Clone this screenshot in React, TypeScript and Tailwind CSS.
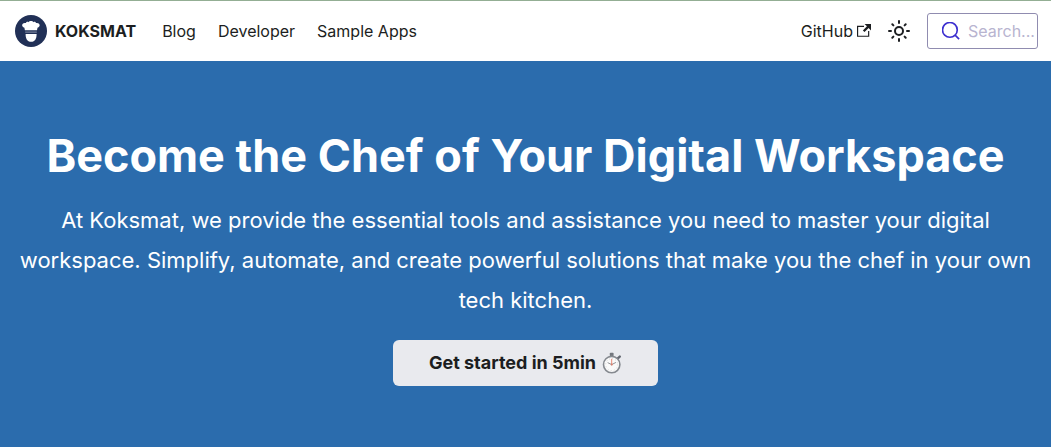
import React from "react";

function ChefLogo() {
  return (
    <svg width="32" height="32" viewBox="0 0 32 32" aria-hidden="true">
      <circle cx="16" cy="16" r="16" fill="#213056" />
      <path
        d="M9.9 15.2 9.4 12.7C7.8 12.4 6.9 11.2 7.2 9.8 7.5 8.4 9 7.5 10.9 8.1 11.3 6.7 12.7 6.4 13.7 7.2 14.3 5.8 17.6 5.7 18.3 7.2 19.5 6.4 20.7 6.9 21 8.1 22.7 7.5 24.3 8.4 24.6 9.8 24.9 11.2 24 12.4 22.5 12.7L22 15.2Z"
        fill="#fff"
      />
      <path d="M10.2 16.6H21.8V17.6H10.2Z" fill="#8d96ad" />
      <path d="M10.6 18.9H21.6C21.6 23.5 20 26.8 16.1 26.8S10.6 23.5 10.6 18.9Z" fill="#fff" />
    </svg>
  );
}

function ExternalIcon() {
  return (
    <svg width="14" height="14" viewBox="0 0 24 24" fill="currentColor" aria-hidden="true">
      <path d="M21 12v10h-21v-19h12v2h-10v15h17v-8h2zm3-12h-10.988l4.035 4-6.977 7.07 2.828 2.828 6.977-7.07 4.125 4.172v-11z" />
    </svg>
  );
}

function SunIcon() {
  return (
    <svg width="24" height="24" viewBox="0 0 24 24" fill="none" stroke="currentColor" strokeWidth="2" strokeLinecap="round" aria-hidden="true">
      <circle cx="12" cy="12" r="4" />
      <path d="M2 12h2M20 12h2M12 2v2M12 20v2M5.3 5.3l1.1 1.1M17.6 17.6l1.1 1.1M18.7 5.3l-1.1 1.1M6.4 17.6l-1.1 1.1" />
    </svg>
  );
}

function SearchIcon() {
  return (
    <svg className="shrink-0" width="18" height="18" viewBox="1 1 18.4 18.4" fill="none" stroke="#3c2fcf" strokeWidth="1.7" strokeLinecap="round" aria-hidden="true">
      <path d="M14.386 14.386l4.0877 4.0877-4.0877-4.0877c-2.9418 2.9419-7.7115 2.9419-10.6533 0-2.9419-2.9418-2.9419-7.7115 0-10.6533 2.9418-2.9419 7.7115-2.9419 10.6533 0 2.9419 2.9418 2.9419 7.7115 0 10.6533z" />
    </svg>
  );
}

function StopwatchIcon() {
  return (
    <svg width="20" height="22" viewBox="0 0 20 22" aria-hidden="true">
      <rect x="7.8" y="0.8" width="3.8" height="3.4" rx="0.8" fill="#73777d" />
      <path d="M15.8 6.4 17.8 4.6" stroke="#666a72" strokeWidth="2.4" strokeLinecap="round" />
      <circle cx="9.7" cy="12.6" r="8.2" fill="#fafafa" stroke="#85898f" strokeWidth="1.6" />
      <circle cx="9.7" cy="12.6" r="6" fill="none" stroke="#b9b8b6" strokeWidth="0.8" strokeDasharray="0.7 2.44" />
      <path d="M9.7 12.6 6 10.8M9.7 12.6 13.6 10.6" stroke="#77797d" strokeWidth="0.8" strokeLinecap="round" />
      <path d="M9.7 13.3V6.8" stroke="#e98a78" strokeWidth="1" />
      <circle cx="9.7" cy="12.6" r="1" fill="#d5806f" />
    </svg>
  );
}

export default function App() {
  return (
    <div className="flex min-h-screen flex-col bg-[#2b6cad] font-['Inter','Liberation_Sans',sans-serif] text-[#1c1e21]">
      <header className="flex items-center justify-between border-t border-[#93ae94] bg-white py-3 pl-[15px] pr-[13px]">
        <nav className="flex items-center gap-[22px] text-base leading-6">
          <a href="#home" className="mr-1 flex items-center gap-2 font-bold">
            <ChefLogo />
            KOKSMAT
          </a>
          <a href="#blog">Blog</a>
          <a href="#developer">Developer</a>
          <a href="#apps">Sample Apps</a>
        </nav>
        <div className="flex items-center">
          <a href="#github" className="flex items-center gap-1 text-base leading-6">
            GitHub
            <ExternalIcon />
          </a>
          <button type="button" aria-label="Switch theme" className="mx-4">
            <SunIcon />
          </button>
          <label className="flex h-9 w-[111px] items-center gap-2 rounded-[3px] border border-[#908cb0] pl-3.5">
            <SearchIcon />
            <input
              type="text"
              aria-label="Search"
              placeholder="Search..."
              className="w-full min-w-0 bg-transparent text-base outline-none placeholder:text-[#b8b4d0]"
            />
          </label>
        </div>
      </header>
      <main className="flex grow flex-col items-center px-4 pb-14 pt-[63px] text-center text-white">
        <h1 className="text-[45px] font-bold leading-[64px]">Become the Chef of Your Digital Workspace</h1>
        <p className="mt-3 text-[22px] leading-[40px]">
          At Koksmat, we provide the essential tools and assistance you need to master your digital workspace. Simplify,
          automate, and create powerful solutions that make you the chef in your own tech kitchen.
        </p>
        <a
          href="#start"
          className="mt-5 flex h-[46px] items-center gap-1.5 rounded-md bg-[#e9eaee] px-9 text-lg font-bold text-[#1c1e21]"
        >
          Get started in 5min
          <StopwatchIcon />
        </a>
      </main>
    </div>
  );
}
